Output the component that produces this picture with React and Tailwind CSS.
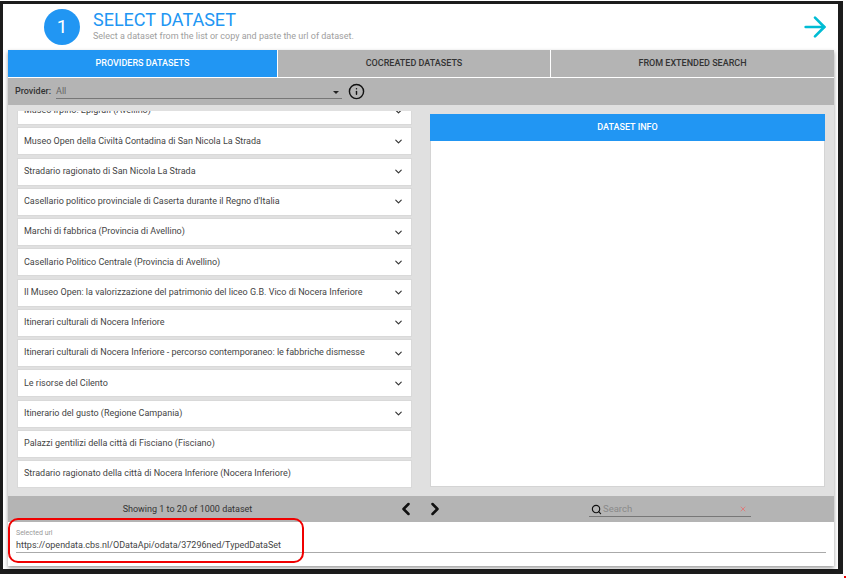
import React from 'react';
import { ChevronDown, ChevronLeft, ChevronRight, Search, X, ArrowRight, Info } from 'lucide-react';

const rows = [
  { name: 'Museo Irpino: Epigrafi (Avellino)', more: true },
  { name: 'Museo Open della Civiltà Contadina di San Nicola La Strada', more: true },
  { name: 'Stradario ragionato di San Nicola La Strada', more: true },
  { name: "Casellario politico provinciale di Caserta durante il Regno d'Italia", more: true },
  { name: 'Marchi di fabbrica (Provincia di Avellino)', more: true },
  { name: 'Casellario Politico Centrale (Provincia di Avellino)', more: true },
  { name: 'Il Museo Open: la valorizzazione del patrimonio del liceo G.B. Vico di Nocera Inferiore', more: true },
  { name: 'Itinerari culturali di Nocera Inferiore', more: true },
  { name: 'Itinerari culturali di Nocera Inferiore - percorso contemporaneo: le fabbriche dismesse', more: true },
  { name: 'Le risorse del Cilento', more: true },
  { name: 'Itinerario del gusto (Regione Campania)', more: true },
  { name: 'Palazzi gentilizi della città di Fisciano (Fisciano)', more: false },
  { name: 'Stradario ragionato della città di Nocera Inferiore (Nocera Inferiore)', more: false },
];

export default function App() {
  return (
    <div className="relative w-[846px] h-[578px] bg-white overflow-hidden font-['Roboto',sans-serif] pt-[1px]">
      <div className="relative w-[843px] h-[573px] border-t-[3px] border-b-[5px] border-l-[3px] border-r-[5px] border-[#1c1c1c] bg-white flex flex-col">
        <div className="h-[46px] flex items-center pl-[41px] pr-[7px] shrink-0">
          <div className="w-9 h-9 rounded-full bg-[#2196f3] text-white flex items-center justify-center text-[19px]">1</div>
          <div className="ml-[13px] flex-1">
            <div className="text-[#2196f3] text-[18px] leading-[20px] mt-[-2px]">SELECT DATASET</div>
            <div className="text-[#9e9e9e] text-[9px] leading-[12px]">Select a dataset from the list or copy and paste the url of dataset.</div>
          </div>
          <ArrowRight className="text-[#00bcd4] w-[32px] h-[32px]" strokeWidth={2} />
        </div>

        <div className="ml-[5px] w-[826px] flex flex-col flex-1 shadow-[0_2px_4px_rgba(0,0,0,0.4)] mb-[3px]">
          <div className="flex gap-[1px] h-[27px] shrink-0">
            <div className="w-[269px] flex items-center justify-center text-[9px] font-medium bg-[#2196f3] text-white">PROVIDERS DATASETS</div>
            <div className="w-[272px] flex items-center justify-center text-[9px] font-medium bg-[#b4b4b4] text-[#333333]">COCREATED DATASETS</div>
            <div className="flex-1 flex items-center justify-center text-[9px] font-medium bg-[#b4b4b4] text-[#333333]">FROM EXTENDED SEARCH</div>
          </div>
          <div className="mt-[1px] h-[27px] shrink-0 bg-[#b4b4b4] flex items-center pl-[7px]">
            <span className="pt-[1px] text-[9px] font-medium text-[#333333]">Provider:</span>
            <div className="ml-[5px] w-[286px] h-[15px] pt-[2px] border-b border-[#777777] flex items-center justify-between pr-[3px] text-[9px] text-[#666666]">
              <span>All</span>
              <span className="w-0 h-0 border-x-[3px] border-x-transparent border-t-[3px] border-t-[#222222]" />
            </div>
            <Info className="ml-[6px] w-[17px] h-[17px] text-[#111111]" strokeWidth={2} />
          </div>

          <div className="flex-1 min-h-0 bg-[#e0e0e0] flex px-[9px]">
            <div className="w-[395px] h-[377px] mt-[6px] overflow-hidden shrink-0">
              <div className="mt-[-14px]">
                {rows.map((r) => (
                  <div key={r.name} className="h-[28px] mb-[2.25px] bg-white border border-[#d9d9d9] flex items-center justify-between pl-[6px] pr-[7px] text-[9px] text-[#444444]">
                    <span>{r.name}</span>
                    {r.more && <ChevronDown className="w-[11px] h-[11px] text-[#333333]" strokeWidth={2.5} />}
                  </div>
                ))}
              </div>
            </div>
            <div className="ml-[18px] my-[9px] flex-1 flex flex-col">
              <div className="h-[27px] shrink-0 bg-[#2196f3] text-white text-[9px] font-medium flex items-center justify-center">DATASET INFO</div>
              <div className="flex-1 bg-white border border-t-0 border-[#d4d4d4]" />
            </div>
          </div>

          <div className="h-[26px] shrink-0 bg-[#b4b4b4] flex items-center text-[9px] text-[#333333]">
            <div className="w-[359px] pt-[1px] text-center">Showing 1 to 20 of 1000 dataset</div>
            <ChevronLeft className="ml-[29px] w-5 h-5 text-[#111111]" strokeWidth={3} />
            <ChevronRight className="ml-[9px] w-5 h-5 text-[#111111]" strokeWidth={3} />
            <div className="ml-[144px] mt-[1px] w-[162px] h-[15px] border-b border-[#777777] flex items-center">
              <Search className="ml-[2px] w-[11px] h-[11px] text-[#111111]" strokeWidth={2.5} />
              <span className="ml-[1px] flex-1 text-[9.5px] text-[#8a8a8a]">Search</span>
              <X className="mr-[4px] w-[8px] h-[8px] text-[#e57373]" strokeWidth={2.5} />
            </div>
          </div>

          <div className="h-[44px] shrink-0 bg-white px-[8px] pt-[7px]">
            <div className="text-[7px] leading-[9px] text-[#999999]">Selected url</div>
            <div className="h-[15px] border-b border-[#aaaaaa] text-[9px] leading-[14px] text-[#444444]">https://opendata.cbs.nl/ODataApi/odata/37296ned/TypedDataSet</div>
          </div>
        </div>

        <div className="absolute left-[5px] top-[514px] w-[296px] h-[45px] border-2 border-[#f00000] rounded-[10px]" />
      </div>
      <div className="absolute left-[844px] top-[576px] w-[2px] h-[2px] bg-[#f00000]" />
    </div>
  );
}
